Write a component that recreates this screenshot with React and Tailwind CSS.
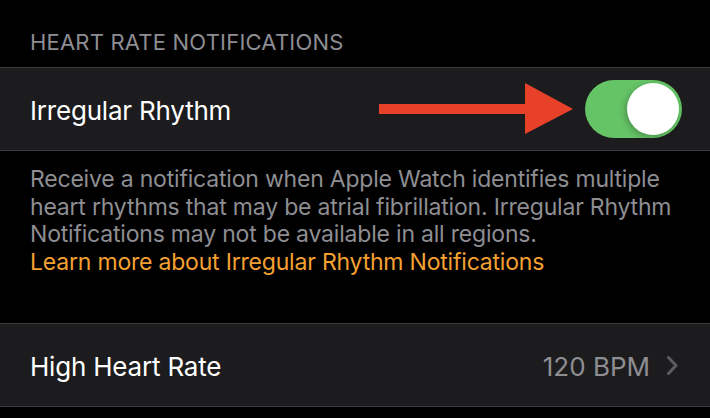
export default function App() {
  return (
    <div
      className="w-[710px] h-[418px] bg-black overflow-hidden text-white"
      style={{ fontFamily: "Inter, 'Noto Sans', sans-serif" }}
    >
      {/* section header */}
      <div className="h-[67px] flex items-end pb-[14px] px-[30px]">
        <span className="text-[22px] leading-none tracking-[0.2px] text-[#8d8d93]">HEART RATE NOTIFICATIONS</span>
      </div>

      {/* toggle row */}
      <div className="h-[84px] bg-[#1c1c1e] border-y border-[#3a3a3c] flex items-center pl-[30px] pr-[28px]">
        <span className="text-[26px] tracking-[-0.2px] flex-1 pt-[2px]">Irregular Rhythm</span>
        <svg width="196" height="52" viewBox="0 0 196 52" className="mr-[10px]">
          <rect x="0" y="21" width="150" height="10" fill="#e8412a" />
          <polygon points="146,0 194,26 146,51" fill="#e8412a" />
        </svg>
        <div className="w-[97px] h-[58px] rounded-full bg-[#65c466] p-[3px] flex justify-end">
          <div className="w-[52px] h-[52px] rounded-full bg-white shadow-[-2px_2px_6px_rgba(0,0,0,0.25)]" />
        </div>
      </div>

      {/* footer text */}
      <div className="h-[172px] px-[30px] pt-[15px] text-[23px] leading-[27.5px] tracking-[-0.2px] text-[#8e8e93]">
        <p>Receive a notification when Apple Watch identifies multiple heart rhythms that may be atrial fibrillation. Irregular Rhythm Notifications may not be available in all regions.</p>
        <p className="text-[#f5a132]">Learn more about Irregular Rhythm Notifications</p>
      </div>

      {/* value row */}
      <div className="h-[84px] bg-[#1c1c1e] border-y border-[#3a3a3c] flex items-center pl-[30px] pr-[32px]">
        <span className="text-[26px] tracking-[-0.2px] flex-1 pt-[2px]">High Heart Rate</span>
        <span className="text-[26px] text-[#8e8e93] mr-[17px] pt-[2px]">120 BPM</span>
        <svg width="11" height="19" viewBox="0 0 11 19">
          <path d="M1.5 1.5 L9 9.5 L1.5 17.5" stroke="#5c5c61" strokeWidth="3" fill="none" strokeLinecap="round" strokeLinejoin="round" />
        </svg>
      </div>
    </div>
  );
}
